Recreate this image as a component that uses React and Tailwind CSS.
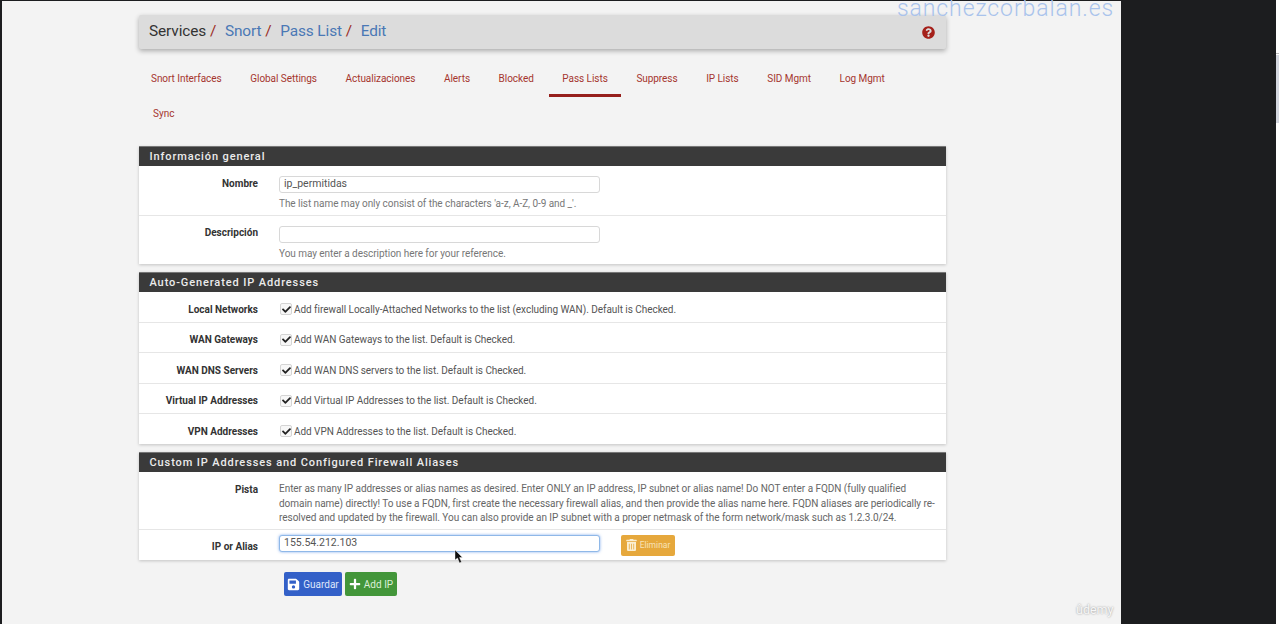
import React from 'react';
import { FaSave, FaPlus, FaTrashAlt, FaQuestionCircle, FaCheck } from 'react-icons/fa';

const tabs = ['Snort Interfaces', 'Global Settings', 'Actualizaciones', 'Alerts', 'Blocked', 'Pass Lists', 'Suppress', 'IP Lists', 'SID Mgmt', 'Log Mgmt'];

const checks = [
    { label: 'Local Networks', text: 'Add firewall Locally-Attached Networks to the list (excluding WAN). Default is Checked.', h: 'h-[31px]' },
    { label: 'WAN Gateways', text: 'Add WAN Gateways to the list. Default is Checked.', h: 'h-[30px]' },
    { label: 'WAN DNS Servers', text: 'Add WAN DNS servers to the list. Default is Checked.', h: 'h-[31px]' },
    { label: 'Virtual IP Addresses', text: 'Add Virtual IP Addresses to the list. Default is Checked.', h: 'h-[30px]' },
    { label: 'VPN Addresses', text: 'Add VPN Addresses to the list. Default is Checked.', h: 'h-[30px]' },
];

const SectionHead = ({ children }) => (
    <div className="h-[20px] bg-[#3a3a3a] border-t border-[#777] pl-[10.5px] pt-[1px] text-[11px] leading-[18px] font-medium tracking-[0.89px] text-[#ececec]">
        {children}
    </div>
);

const Label = ({ children }) => (
    <div className="w-[119px] shrink-0 text-right text-[10px] font-bold text-[#333]">{children}</div>
);

const TextInput = ({ value, focus }) => (
    <div className={`w-[321px] h-[17px] rounded-[3px] bg-white px-[4px] text-[10.5px] leading-[14px] text-[#555] border ${focus ? 'border-[#8fb8e8] shadow-[0_0_3px_rgba(80,140,230,0.7)]' : 'border-[#d8d8d8]'}`}>
        {value}
    </div>
);

const App = () => {
    return (
        <div className="h-[624px] w-[1279px] overflow-hidden bg-[#1c1d1f] pt-[1px] pl-[2px] font-['Roboto',sans-serif] flex">
            <div className="relative w-[1119px] h-[623px] bg-[#f3f3f3] pt-[14px] pl-[137px] shrink-0">
                {/* Watermarks */}
                <div className="absolute top-[-6px] left-[895px] text-[23px] font-light leading-[28px] tracking-[0.9px] text-[#a9c3ec]">sanchezcorbalan.es</div>
                <div className="absolute top-[602px] left-[1074px] text-[12.5px] leading-[14px] text-[#f7f7f7] [text-shadow:0_0_2px_#8a8a8a]">ûdemy</div>

                <div className="w-[807px]">
                    {/* Breadcrumb */}
                    <div className="h-[34px] rounded-[2px] bg-[#dcdcdc] shadow-[0_2px_5px_rgba(0,0,0,0.3)] pl-[10px] pr-[11px] flex items-center justify-between">
                        <div className="text-[15.4px] tracking-[-0.1px] text-[#333]">
                            Services<span className="text-[#9b2c24]"> / </span>
                            <span className="ml-[5px] text-[#4a78b5]">Snort</span><span className="text-[#9b2c24]"> / </span>
                            <span className="ml-[5px] text-[#4a78b5]">Pass List</span><span className="text-[#9b2c24]"> / </span>
                            <span className="ml-[5px] text-[#4a78b5]">Edit</span>
                        </div>
                        <FaQuestionCircle className="mt-[1px] w-[13px] h-[13px] text-[#a5201a]" />
                    </div>

                    {/* Tabs */}
                    <div className="mt-[13px] -ml-[1px] h-[35px] flex items-start gap-[2.6px] text-[10px] text-[#a5352e]">
                        {tabs.map((tab) => (
                            <div key={tab} className={`h-[35px] px-[13px] pt-[11px] leading-[12px] tracking-[-0.05px] ${tab === 'Pass Lists' ? 'border-b-[3px] border-[#96201c]' : ''}`}>
                                {tab}
                            </div>
                        ))}
                    </div>
                    <div className="h-[35px] pl-[14px] pt-[11px] text-[10px] leading-[12px] text-[#a5352e]">Sync</div>

                    {/* Informacion general */}
                    <div className="mt-[14px] shadow-[0_1px_3px_rgba(0,0,0,0.2)]">
                        <SectionHead>Información general</SectionHead>
                        <div className="bg-white">
                            <div className="h-[50px] flex gap-[21px] pt-[10px] border-b border-[#e6e6e6]">
                                <Label>Nombre</Label>
                                <div>
                                    <TextInput value="ip_permitidas" />
                                    <div className="mt-[4px] text-[10px] leading-[14px] tracking-[-0.05px] text-[#777]">The list name may only consist of the characters 'a-z, A-Z, 0-9 and _'.</div>
                                </div>
                            </div>
                            <div className="h-[48px] flex gap-[21px] pt-[9px]">
                                <Label>Descripción</Label>
                                <div className="mt-[1px]">
                                    <TextInput value="" />
                                    <div className="mt-[4px] text-[10px] leading-[14px] tracking-[-0.05px] text-[#777]">You may enter a description here for your reference.</div>
                                </div>
                            </div>
                        </div>
                    </div>

                    {/* Auto generated */}
                    <div className="mt-[8px] shadow-[0_1px_3px_rgba(0,0,0,0.2)]">
                        <SectionHead>Auto-Generated IP Addresses</SectionHead>
                        <div className="bg-white">
                            {checks.map((row, i) => (
                                <div key={row.label} className={`${row.h} pt-[4px] flex items-center gap-[21px] ${i < checks.length - 1 ? 'border-b border-[#e6e6e6]' : ''}`}>
                                    <Label>{row.label}</Label>
                                    <div className="flex items-center gap-[3px] text-[10px] tracking-[-0.04px] text-[#555]">
                                        <span className="ml-[1px] w-[12px] h-[12px] rounded-[2px] border border-[#d4d4d4] bg-[#f7f7f7] flex items-center justify-center">
                                            <FaCheck className="w-[9px] h-[9px] text-[#222]" />
                                        </span>
                                        <span className="-ml-[1px]">{row.text}</span>
                                    </div>
                                </div>
                            ))}
                        </div>
                    </div>

                    {/* Custom IP */}
                    <div className="mt-[8px] shadow-[0_1px_3px_rgba(0,0,0,0.2)]">
                        <SectionHead>Custom IP Addresses and Configured Firewall Aliases</SectionHead>
                        <div className="bg-white">
                            <div className="h-[58px] flex gap-[21px] pt-[10px] border-b border-[#e6e6e6]">
                                <Label>Pista</Label>
                                <div className="w-[660px] text-[10px] leading-[14.5px] tracking-[-0.04px] text-[#666]">
                                    Enter as many IP addresses or alias names as desired. Enter ONLY an IP address, IP subnet or alias name! Do NOT enter a FQDN (fully qualified domain name) directly! To use a FQDN, first create the necessary firewall alias, and then provide the alias name here. FQDN aliases are periodically re-resolved and updated by the firewall. You can also provide an IP subnet with a proper netmask of the form network/mask such as 1.2.3.0/24.
                                </div>
                            </div>
                            <div className="relative h-[30px] flex items-center gap-[21px]">
                                <div className="pt-[2px]"><Label>IP or Alias</Label></div>
                                <div className="-mt-[3px]"><TextInput value="155.54.212.103" focus /></div>
                                <div className="h-[21px] w-[54px] rounded-[2px] bg-[#e6a83c] flex items-center justify-center gap-[3px] text-[8.5px] text-[#f7e3b8]">
                                    <FaTrashAlt className="w-[11px] h-[12px] text-[#fbeed0]" />
                                    Eliminar
                                </div>
                                {/* Cursor */}
                                <svg width="10" height="14" viewBox="0 0 10 14" className="absolute left-[315px] top-[20px]">
                                    <path d="M1 0 L1 10 L3.5 8 L5.5 13 L7.5 12 L5.5 7.5 L8.5 7.5 Z" fill="#111" stroke="#fff" strokeWidth="0.4" />
                                </svg>
                            </div>
                        </div>
                    </div>

                    {/* Buttons */}
                    <div className="mt-[12px] ml-[145px] flex gap-[3px]">
                        <div className="h-[24px] w-[58px] rounded-[2px] bg-[#3360c8] flex items-center justify-center gap-[3px] text-[10px] text-[#dfe7fb]">
                            <FaSave className="w-[13px] h-[13px] text-white" />
                            Guardar
                        </div>
                        <div className="h-[24px] w-[52px] rounded-[2px] bg-[#43963a] flex items-center justify-center gap-[3px] text-[10px] text-[#dcefd8]">
                            <FaPlus className="w-[12px] h-[12px] text-white" />
                            Add IP
                        </div>
                    </div>
                </div>
            </div>
            {/* Sliver of the neighbouring window */}
            <div className="ml-[155px] -mt-[1px] w-[3px] h-[624px] bg-white shrink-0">
                <div className="mt-[53px] h-px bg-[#bdbdbd]" />
                <div className="mt-[1px] h-[68px] bg-[#d5d8e0]" />
            </div>
        </div>
    );
};

export default App;
